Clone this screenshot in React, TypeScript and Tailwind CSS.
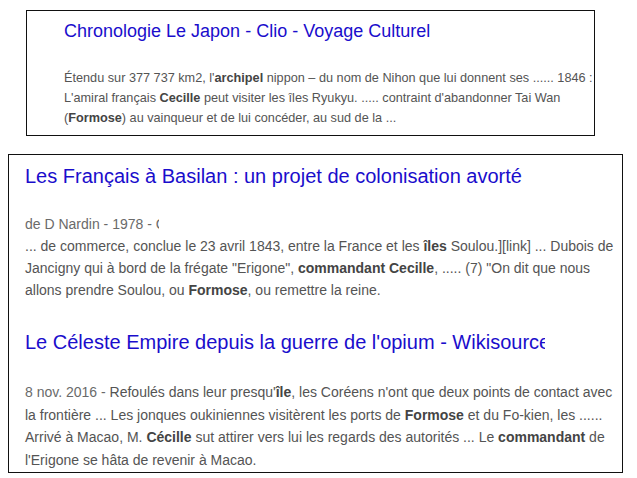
export default function App() {
  return (
    <div className="w-[637px] h-[478px] bg-white overflow-hidden font-['Liberation_Sans',Arial,sans-serif] relative">
      <div className="ml-[26px] mt-[10px] w-[569px] h-[126px] border border-[#111] pl-[37px] pt-[9px]">
        <div className="text-[18px] leading-[22px] text-[#1a0dcc] whitespace-nowrap">
          Chronologie Le Japon - Clio - Voyage Culturel
        </div>
        <div className="mt-[26px] text-[12.7px] leading-[20px] text-[#545454] whitespace-nowrap">
          <div>
            Étendu sur 377 737 km2, l'<b className="text-[#444]">archipel</b> nippon – du nom de Nihon que lui donnent ses ...... 1846 :
          </div>
          <div>
            L'amiral français <b className="text-[#444]">Cecille</b> peut visiter les îles Ryukyu. ..... contraint d'abandonner Tai Wan
          </div>
          <div>
            (<b className="text-[#444]">Formose</b>) au vainqueur et de lui concéder, au sud de la ...
          </div>
        </div>
      </div>

      <div className="ml-[8px] mt-[18px] w-[615px] h-[319px] border border-[#111] pl-[16px] pt-[9px]">
        <div className="w-[520px] overflow-hidden whitespace-nowrap text-[20px] leading-[24px] text-[#1a0dcc]">
          Les Français à Basilan : un projet de colonisation avorté
        </div>
        <div className="mt-[25px] text-[14px] leading-[22px] text-[#545454] whitespace-nowrap">
          <div className="w-[134px] overflow-hidden text-[#6a6a6a]">de D Nardin - 1978 - Cité 1 fois</div>
          <div>
            ... de commerce, conclue le 23 avril 1843, entre la France et les <b className="text-[#444]">îles</b> Soulou.][link] ... Dubois de
          </div>
          <div>
            Jancigny qui à bord de la frégate "Erigone", <b className="text-[#444]">commandant Cecille</b>, ..... (7) "On dit que nous
          </div>
          <div>
            allons prendre Soulou, ou <b className="text-[#444]">Formose</b>, ou remettre la reine.
          </div>
        </div>

        <div className="mt-[29px] w-[520px] overflow-hidden whitespace-nowrap text-[20px] leading-[24px] text-[#1a0dcc]">
          Le Céleste Empire depuis la guerre de l'opium - Wikisource
        </div>
        <div className="mt-[27px] text-[14px] leading-[22.5px] text-[#545454] whitespace-nowrap">
          <div>
            <span className="text-[#6a6a6a]">8 nov. 2016 - </span>Refoulés dans leur presqu'<b className="text-[#444]">île</b>, les Coréens n'ont que deux points de contact avec
          </div>
          <div>
            la frontière ... Les jonques oukiniennes visitèrent les ports de <b className="text-[#444]">Formose</b> et du Fo-kien, les ......
          </div>
          <div>
            Arrivé à Macao, M. <b className="text-[#444]">Cécille</b> sut attirer vers lui les regards des autorités ... Le <b className="text-[#444]">commandant</b> de
          </div>
          <div>l'Erigone se hâta de revenir à Macao.</div>
        </div>
      </div>
    </div>
  );
}
